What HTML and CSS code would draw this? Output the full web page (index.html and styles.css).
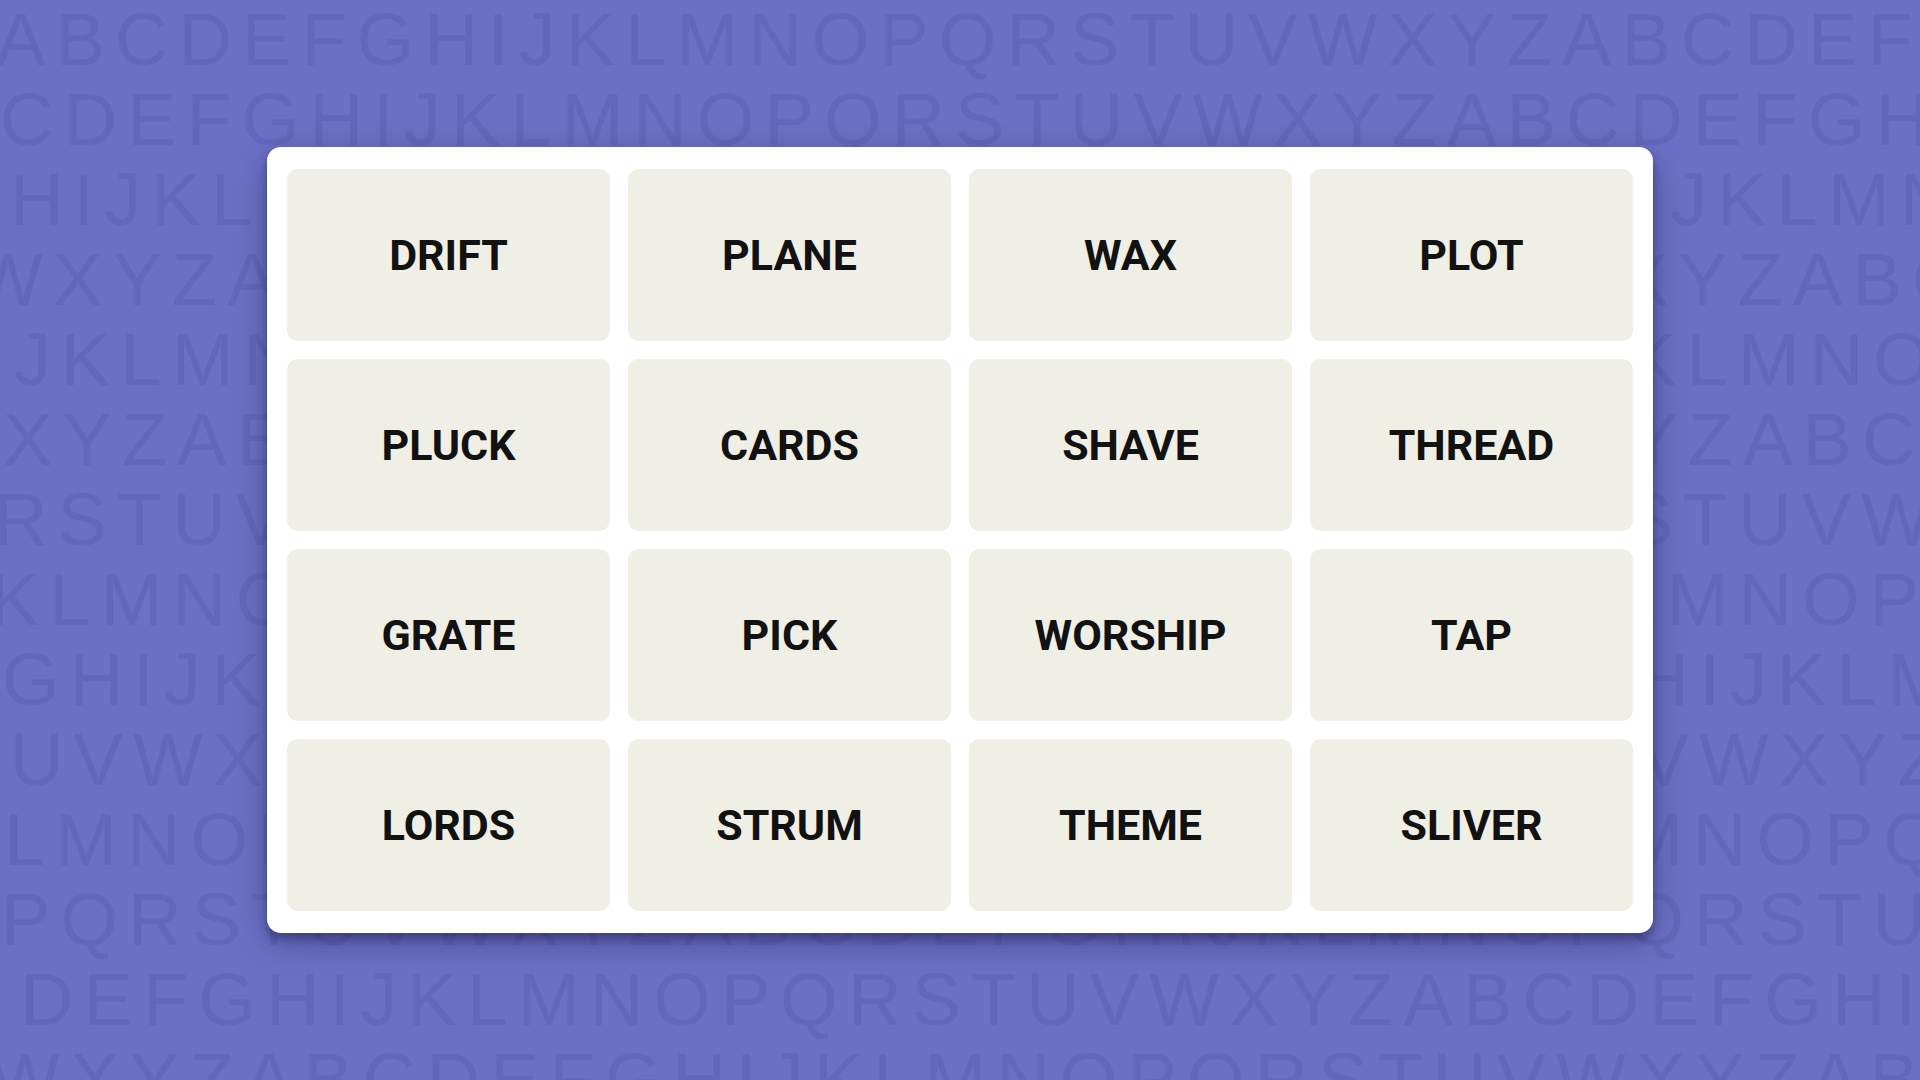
FILE: index.html
```html
<!DOCTYPE html>
<html lang="en">
  <head>
    <meta charset="UTF-8" />
    <title>Connections</title>
    <link rel="stylesheet" href="styles.css">
  </head>
  <body>
    <div class="stage">
      <div class="letters" aria-hidden="true">
        <div class="row">ABCDEFGHIJKLMNOPQRSTUVWXYZABCDEFGHIJKLMN</div>
        <div class="row">CDEFGHIJKLMNOPQRSTUVWXYZABCDEFGHIJKLMNOP</div>
        <div class="row">HIJKLMNOPQRSTUVWXYZABCDEFGHIJKLMNOPQRSTU</div>
        <div class="row">WXYZABCDEFGHIJKLMNOPQRSTUVWXYZABCDEFGHIJ</div>
        <div class="row">JKLMNOPQRSTUVWXYZABCDEFGHIJKLMNOPQRSTUVW</div>
        <div class="row">XYZABCDEFGHIJKLMNOPQRSTUVWXYZABCDEFGHIJK</div>
        <div class="row">RSTUVWXYZABCDEFGHIJKLMNOPQRSTUVWXYZABCDE</div>
        <div class="row">KLMNOPQRSTUVWXYZABCDEFGHIJKLMNOPQRSTUVWX</div>
        <div class="row">GHIJKLMNOPQRSTUVWXYZABCDEFGHIJKLMNOPQRST</div>
        <div class="row">UVWXYZABCDEFGHIJKLMNOPQRSTUVWXYZABCDEFGH</div>
        <div class="row">LMNOPQRSTUVWXYZABCDEFGHIJKLMNOPQRSTUVWXY</div>
        <div class="row">PQRSTUVWXYZABCDEFGHIJKLMNOPQRSTUVWXYZABC</div>
        <div class="row">DEFGHIJKLMNOPQRSTUVWXYZABCDEFGHIJKLMNOPQ</div>
        <div class="row">WXYZABCDEFGHIJKLMNOPQRSTUVWXYZABCDEFGHIJ</div>
      </div>
      <main class="board">
        <div class="tile">DRIFT</div>
        <div class="tile">PLANE</div>
        <div class="tile">WAX</div>
        <div class="tile">PLOT</div>
        <div class="tile">PLUCK</div>
        <div class="tile">CARDS</div>
        <div class="tile">SHAVE</div>
        <div class="tile">THREAD</div>
        <div class="tile">GRATE</div>
        <div class="tile">PICK</div>
        <div class="tile">WORSHIP</div>
        <div class="tile">TAP</div>
        <div class="tile">LORDS</div>
        <div class="tile">STRUM</div>
        <div class="tile">THEME</div>
        <div class="tile">SLIVER</div>
      </main>
    </div>
  </body>
</html>
```

FILE: styles.css
```css
body {
  margin: 0;
  background: #6c70c5;
  overflow: hidden;
}
.stage {
  display: grid;
  grid-template-rows: 100vh;
  height: 100vh;
}
.letters,
.board {
  grid-area: 1 / 1;
}

/* alphabet wallpaper */
.letters {
  min-height: 0;
  overflow: hidden;
  font-family: "Liberation Sans", Arial, sans-serif;
  font-size: 74px;
  line-height: 80px;
  letter-spacing: 10.1px;
  color: #6367bb;
  white-space: nowrap;
  user-select: none;
}
.row:nth-child(1) { margin-left: -4px; }
.row:nth-child(2) { margin-left: 0; }
.row:nth-child(3) { margin-left: 10px; }
.row:nth-child(4) { margin-left: -27px; }
.row:nth-child(5) { margin-left: 14px; }
.row:nth-child(6) { margin-left: 3px; }
.row:nth-child(7) { margin-left: -6px; }
.row:nth-child(8) { margin-left: -10px; }
.row:nth-child(9) { margin-left: 2px; }
.row:nth-child(10) { margin-left: 10px; }
.row:nth-child(11) { margin-left: 4px; }
.row:nth-child(12) { margin-left: 1px; }
.row:nth-child(13) { margin-left: 20px; }
.row:nth-child(14) { margin-left: -10px; }

/* game board */
.board {
  place-self: center;
  display: grid;
  grid-template-columns: repeat(4, 323px);
  grid-auto-rows: 172px;
  gap: 18px;
  padding: 22px 20px;
  background: #fff;
  border-radius: 14px;
  box-shadow: 0 6px 10px rgba(20, 20, 60, 0.38), 0 10px 32px rgba(20, 20, 60, 0.3);
}
.tile {
  display: flex;
  align-items: center;
  justify-content: center;
  background: #efefe6;
  border-radius: 11px;
  font-family: Roboto, "Liberation Sans", sans-serif;
  font-weight: 700;
  font-size: 43px;
  color: #121212;
}
```
